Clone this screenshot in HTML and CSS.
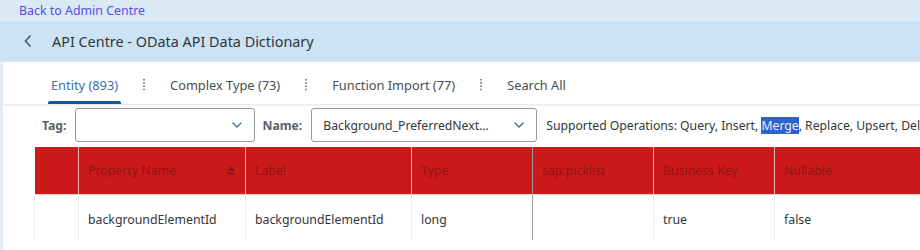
FILE: index.html
```html
<!DOCTYPE html>
<html lang="en">
<head>
    <meta charset="UTF-8">
    <title>API Centre - OData API Data Dictionary</title>
    <link rel="stylesheet" href="styles.css">
</head>
<body>
    <div class="topbar">
        <a class="back-link" href="#">Back to Admin Centre</a>
    </div>

    <div class="page-header">
        <svg class="chevron-left" width="10" height="14" viewBox="0 0 10 14">
            <path d="M7.5 1.5 L2.5 7 L7.5 12.5" fill="none" stroke="#3b5a78" stroke-width="1.6"/>
        </svg>
        <h1>API Centre - OData API Data Dictionary</h1>
    </div>

    <div class="content">
        <div class="side-strip"></div>
        <div class="main">
            <!-- Tabs -->
            <div class="tabs">
                <div class="tab active">Entity (893)</div>
                <span class="tab-sep"></span>
                <div class="tab">Complex Type (73)</div>
                <span class="tab-sep"></span>
                <div class="tab">Function Import (77)</div>
                <span class="tab-sep"></span>
                <div class="tab">Search All</div>
            </div>

            <!-- Filters -->
            <div class="filters">
                <label class="filter-label">Tag:</label>
                <div class="select tag-select">
                    <span class="select-value"></span>
                    <svg class="select-arrow" width="12" height="8" viewBox="0 0 12 8">
                        <path d="M1.5 1.5 L6 6 L10.5 1.5" fill="none" stroke="#4a6b8c" stroke-width="1.3"/>
                    </svg>
                </div>
                <label class="filter-label">Name:</label>
                <div class="select name-select">
                    <span class="select-value">Background_PreferredNext...</span>
                    <svg class="select-arrow" width="12" height="8" viewBox="0 0 12 8">
                        <path d="M1.5 1.5 L6 6 L10.5 1.5" fill="none" stroke="#4a6b8c" stroke-width="1.3"/>
                    </svg>
                </div>
                <div class="operations">Supported Operations: Query, Insert, <span class="highlight">Merge</span>, Replace, Upsert, Delete</div>
            </div>

            <!-- Properties table -->
            <table class="props">
                <colgroup>
                    <col style="width: 44px">
                    <col style="width: 167px">
                    <col style="width: 166px">
                    <col style="width: 121px">
                    <col style="width: 121px">
                    <col style="width: 121px">
                    <col style="width: 160px">
                </colgroup>
                <thead>
                    <tr>
                        <th></th>
                        <th>
                            <div class="th-sort">
                                <span>Property Name</span>
                                <svg width="10" height="9" viewBox="0 0 10 9">
                                    <path d="M5 0.5 L9 5 L1 5 Z" fill="#8e1414"/>
                                    <rect x="1" y="6.5" width="8" height="1.6" fill="#8e1414"/>
                                </svg>
                            </div>
                        </th>
                        <th>Label</th>
                        <th class="dark-edge">Type</th>
                        <th>sap:picklist</th>
                        <th>Business Key</th>
                        <th>Nullable</th>
                    </tr>
                </thead>
                <tbody>
                    <tr>
                        <td></td>
                        <td>backgroundElementId</td>
                        <td>backgroundElementId</td>
                        <td class="dark-edge">long</td>
                        <td></td>
                        <td>true</td>
                        <td>false</td>
                    </tr>
                </tbody>
            </table>
        </div>
    </div>
</body>
</html>
```

FILE: styles.css
```css
/* Reset */
* {
    margin: 0;
    padding: 0;
    box-sizing: border-box;
}

body {
    font-family: "Noto Sans", Arial, sans-serif;
    background-color: #ffffff;
    color: #32363a;
    width: 920px;
    height: 250px;
    overflow: hidden;
}

/* Top link bar */
.topbar {
    height: 21px;
    background-color: #d9eaf5;
    padding-left: 19px;
    display: flex;
    align-items: center;
}

.back-link {
    font-size: 12.4px;
    color: #5b4de6;
    text-decoration: none;
}

/* Page header */
.page-header {
    height: 41px;
    background-color: #cce3f6;
    border-bottom: 1px solid #dfe6ec;
    display: flex;
    align-items: center;
    padding-left: 23px;
}

.chevron-left {
    margin-right: 19px;
}

.page-header h1 {
    font-size: 14.4px;
    font-weight: normal;
    color: #32363a;
}

/* Content */
.content {
    display: flex;
}

.side-strip {
    flex-shrink: 0;
    width: 3px;
    height: 190px;
    background-color: #e4edf6;
}

.main {
    flex: 1;
    min-width: 0;
}

/* Tabs */
.tabs {
    height: 42px;
    display: flex;
    align-items: center;
    padding-left: 45px;
    box-shadow: 0 1px 2px rgba(0, 0, 0, 0.12);
}

.tab {
    position: relative;
    height: 100%;
    display: flex;
    align-items: center;
    padding: 3px 3px 0;
    font-size: 12.8px;
    color: #4a4d50;
}

.tab.active {
    color: #3d6ea5;
}

.tab.active::after {
    content: "";
    position: absolute;
    left: 0;
    right: 0;
    bottom: 0;
    height: 3px;
    border-radius: 2px 2px 0 0;
    background-color: #0b57a4;
}

.tab-sep {
    width: 2px;
    height: 13px;
    margin: 2px 22px 0;
    background-image: radial-gradient(circle, #8a8f94 0.9px, transparent 1.1px);
    background-size: 2px 3.3px;
}

/* Filters */
.filters {
    display: flex;
    align-items: center;
    padding: 4px 0 0 39px;
    height: 38px;
    font-size: 12.2px;
    white-space: nowrap;
    overflow: hidden;
}

.filter-label {
    flex-shrink: 0;
    font-weight: bold;
    color: #5b5f63;
    margin-right: 9px;
}

.select {
    flex-shrink: 0;
    height: 34px;
    border: 1px solid #8f9aa5;
    border-radius: 3px;
    display: flex;
    align-items: center;
    justify-content: space-between;
    padding: 0 11px 0 11px;
    margin-right: 7px;
    color: #32363a;
}

.tag-select {
    width: 180px;
}

.name-select {
    width: 226px;
    margin-right: 9px;
}

.operations {
    flex-shrink: 0;
    color: #32363a;
}

.highlight {
    background-color: #2f63c8;
    color: #e8eef8;
}

/* Table */
.props {
    margin: 5px 0 0 31px;
    border-collapse: collapse;
    table-layout: fixed;
    width: 900px;
    font-size: 12.3px;
}

.props th {
    height: 47px;
    background-color: #cc1a1a;
    color: #8e1414;
    font-weight: normal;
    text-align: left;
    padding: 1px 9px 0;
    border-left: 1px solid #e9b4b4;
    border-bottom: 1px solid #eecfcf;
}

.props th:first-child {
    border-left: none;
}

.props td {
    height: 46px;
    padding: 5px 9px 0;
    border-left: 1px solid #ececec;
    color: #32363a;
}

.props td:first-child {
    border-left: 1px solid #ececec;
}

.props th.dark-edge,
.props td.dark-edge {
    border-right: 1px solid #9a9a9a;
}

.th-sort {
    display: flex;
    align-items: center;
    justify-content: space-between;
}
```
